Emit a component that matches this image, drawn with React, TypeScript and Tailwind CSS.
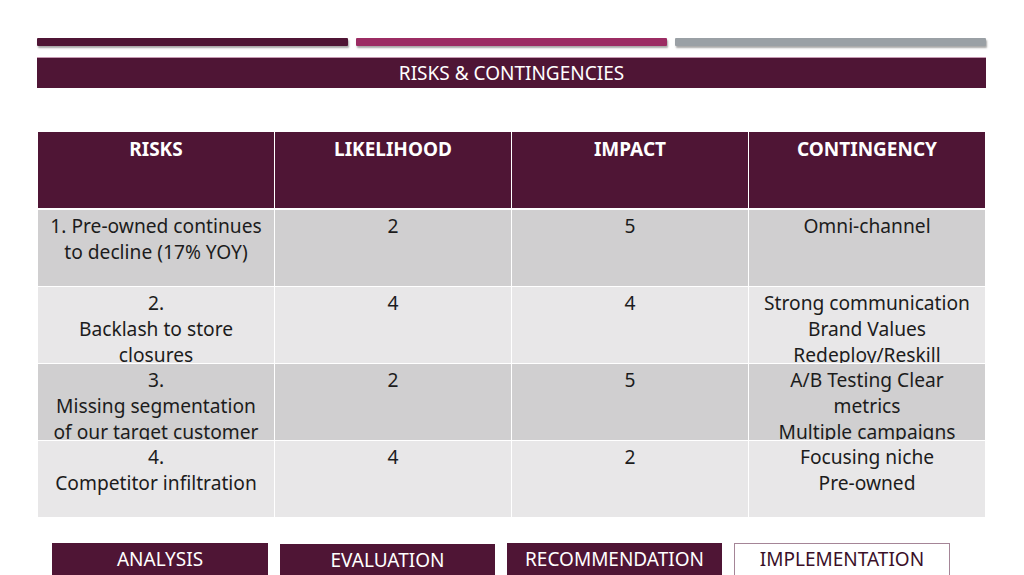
import React from "react";

const rows = [
  { risk: ["1. Pre-owned continues", "to decline (17% YOY)"], likelihood: "2", impact: "5", contingency: ["Omni-channel"], dark: true },
  { risk: ["2.", "Backlash to store", "closures"], likelihood: "4", impact: "4", contingency: ["Strong communication", "Brand Values", "Redeploy/Reskill"], dark: false },
  { risk: ["3.", "Missing segmentation", "of our target customer"], likelihood: "2", impact: "5", contingency: ["A/B Testing Clear", "metrics", "Multiple campaigns"], dark: true },
  { risk: ["4.", "Competitor infiltration"], likelihood: "4", impact: "2", contingency: ["Focusing niche", "Pre-owned"], dark: false },
];

const headers = ["RISKS", "LIKELIHOOD", "IMPACT", "CONTINGENCY"];

function Cell({ lines, dark }: { lines: string[]; dark: boolean }) {
  return (
    <div
      className={`h-[76px] overflow-hidden pt-[3px] text-center text-[19.2px] leading-[26px] text-[#1c1c1c] ${
        dark ? "bg-[#d0cfd0]" : "bg-[#e8e7e8]"
      }`}
    >
      {lines.map((l, i) => (
        <div key={i}>{l}</div>
      ))}
    </div>
  );
}

export default function App() {
  return (
    <div
      className="relative h-[575px] w-[1024px] overflow-hidden bg-white"
      style={{ fontFamily: '"Noto Sans", "Open Sans", sans-serif' }}
    >
      {/* --- TOP ACCENT BARS --- */}
      <div className="ml-[37px] mr-[38px] grid grid-cols-3 gap-[8px] pt-[38px]">
        <div className="h-[8px] rounded-[1px] bg-[#4f1535] shadow-[1px_2px_2px_rgba(0,0,0,0.35)]" />
        <div className="h-[8px] rounded-[1px] bg-[#9b2c63] shadow-[1px_2px_2px_rgba(0,0,0,0.35)]" />
        <div className="h-[8px] rounded-[1px] bg-[#9aa0a5] shadow-[1px_2px_2px_rgba(0,0,0,0.35)]" />
      </div>

      {/* --- TITLE --- */}
      <div className="ml-[37px] mr-[38px] mt-[11px] flex h-[31px] items-center justify-center border-t border-[#c79ab3] bg-[#4f1535] text-[19px] text-white">
        RISKS &amp; CONTINGENCIES
      </div>

      {/* --- TABLE --- */}
      <div className="ml-[38px] mt-[44px] w-[947px]">
        <div className="grid grid-cols-4 gap-x-[1px]">
          {headers.map((h) => (
            <div
              key={h}
              className="h-[76px] bg-[#4f1535] pt-[4px] text-center text-[19px] font-bold leading-[26px] text-white"
            >
              {h}
            </div>
          ))}
        </div>
        <div className="mt-[2px] flex flex-col gap-y-[1px]">
          {rows.map((r, i) => (
            <div key={i} className="grid grid-cols-4 gap-x-[1px]">
              <Cell lines={r.risk} dark={r.dark} />
              <Cell lines={[r.likelihood]} dark={r.dark} />
              <Cell lines={[r.impact]} dark={r.dark} />
              <Cell lines={r.contingency} dark={r.dark} />
            </div>
          ))}
        </div>
      </div>

      {/* --- BOTTOM NAV --- */}
      <div className="ml-[52px] mt-[26px] flex gap-[12px] text-[19px]">
        <div className="flex h-[33px] w-[216px] items-center justify-center bg-[#4f1535] pb-[1px] text-white">
          ANALYSIS
        </div>
        <div className="mt-[1px] flex h-[33px] w-[215px] items-center justify-center bg-[#4f1535] text-white">
          EVALUATION
        </div>
        <div className="flex h-[33px] w-[215px] items-center justify-center bg-[#4f1535] pb-[1px] text-white">
          RECOMMENDATION
        </div>
        <div className="flex h-[33px] w-[216px] items-center justify-center border border-[#a58597] bg-white text-[#3a1028]">
          IMPLEMENTATION
        </div>
      </div>
    </div>
  );
}
